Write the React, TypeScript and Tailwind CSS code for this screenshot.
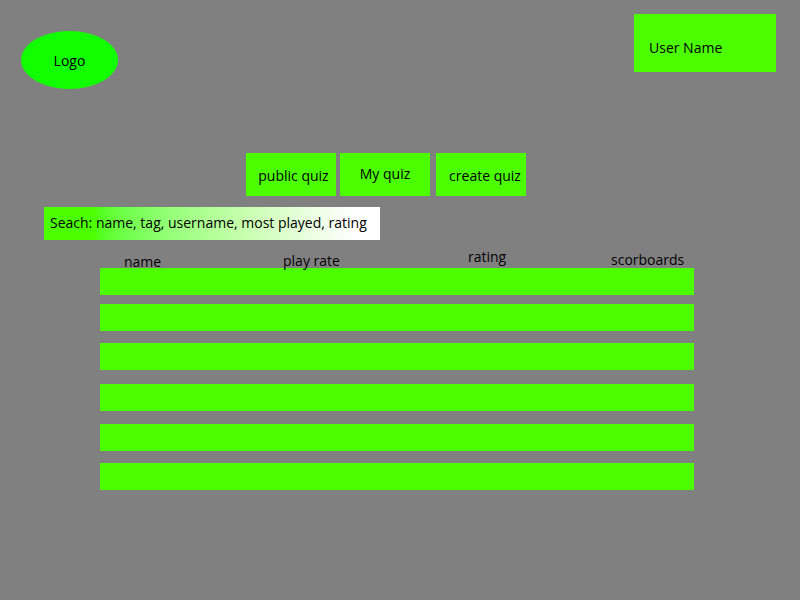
const rows = ["mt-0", "mt-[9px]", "mt-[12px]", "mt-[14px]", "mt-[13px]", "mt-[12px]"];

export default function App() {
	return (
		<div className="w-[800px] h-[600px] bg-[#808080] text-[14px] text-black font-['Open_Sans',sans-serif] overflow-hidden">
			<div className="flex justify-between items-start">
				<div className="ml-[21px] mt-[31px] w-[97px] h-[58px] rounded-[50%] bg-[#11ff00] flex items-center justify-center">
					Logo
				</div>
				<div className="mr-[24px] mt-[14px] w-[142px] h-[58px] bg-[#4cff00] flex items-center pl-[15px] pt-[9px]">
					User Name
				</div>
			</div>

			<div className="flex mt-[64px] pl-[246px] h-[43px]">
				<button className="w-[90px] h-full bg-[#4cff00] flex items-center justify-center pl-[5px] pt-[1px]">
					public quiz
				</button>
				<button className="ml-[4px] w-[90px] h-full bg-[#4cff00] flex items-center justify-center pb-[3px]">
					My quiz
				</button>
				<button className="ml-[6px] w-[90px] h-full bg-[#4cff00] flex items-center justify-center pl-[8px] pt-[1px]">
					create quiz
				</button>
			</div>

			<div className="ml-[44px] mt-[11px] w-[336px] h-[33px] bg-gradient-to-r from-[#4cff00] from-[15%] via-[#c8ffb0] via-[60%] to-white to-[92%] flex items-center pl-[6px] pb-[2px]">
				Seach: name, tag, username, most played, rating
			</div>

			<div className="relative ml-[100px] mt-[12px] w-[594px] h-[16px]">
				<span className="absolute left-[24px] top-[-1px]">name</span>
				<span className="absolute left-[183px] top-[-2px]">play rate</span>
				<span className="absolute left-[368px] top-[-6px]">rating</span>
				<span className="absolute left-[511px] top-[-3px]">scorboards</span>
			</div>

			<div className="ml-[100px] flex flex-col">
				{rows.map((m, i) => (
					<div key={i} className={`${m} w-[594px] h-[27px] bg-[#4cff00]`} />
				))}
			</div>
		</div>
	);
}
